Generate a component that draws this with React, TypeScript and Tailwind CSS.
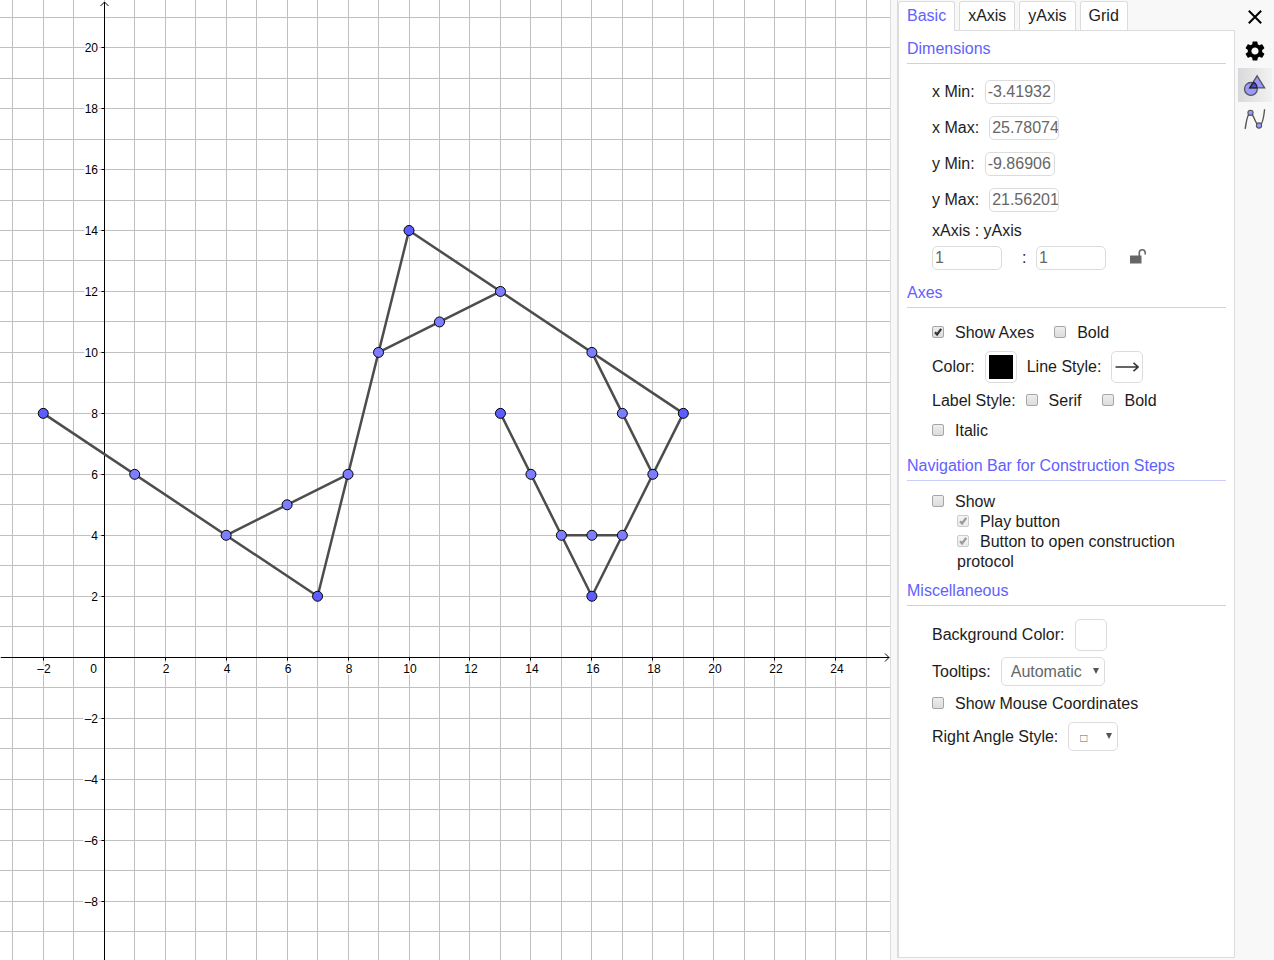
import React, { useEffect, useRef, useState } from "react";
import { MdSettings } from "react-icons/md";

const UNIT = 30.479;
const ORIGIN_X = 104.22;
const ORIGIN_Y = 657.2;

const px = (x: number) => ORIGIN_X + x * UNIT;
const py = (y: number) => ORIGIN_Y - y * UNIT;
const snap = (v: number) => Math.floor(v) + 0.5;

type Pt = [number, number];

const segments: [Pt, Pt][] = [
  [[-2, 8], [7, 2]],
  [[4, 4], [8, 6]],
  [[7, 2], [10, 14]],
  [[9, 10], [13, 12]],
  [[10, 14], [19, 8]],
  [[16, 10], [18, 6]],
  [[19, 8], [16, 2]],
  [[15, 4], [17, 4]],
  [[13, 8], [16, 2]],
];

const freePoints: Pt[] = [[-2, 8], [7, 2], [10, 14], [19, 8], [16, 2], [13, 8]];
const derivedPoints: Pt[] = [
  [1, 6], [4, 4], [6, 5], [8, 6], [9, 10], [11, 11], [13, 12],
  [16, 10], [17, 8], [18, 6], [17, 4], [15, 4], [16, 4], [14, 6],
];

function range(from: number, to: number) {
  const out: number[] = [];
  for (let i = from; i <= to; i++) out.push(i);
  return out;
}

const format = (n: number) => (n < 0 ? `–${-n}` : `${n}`);

function GraphicsView() {
  const ref = useRef<HTMLDivElement>(null);
  const [size, setSize] = useState({ w: 890, h: 960 });

  useEffect(() => {
    const el = ref.current;
    if (!el) return;
    const update = () => setSize({ w: el.clientWidth, h: el.clientHeight });
    update();
    const observer = new ResizeObserver(update);
    observer.observe(el);
    return () => observer.disconnect();
  }, []);

  const xs = range(Math.ceil(-ORIGIN_X / UNIT), Math.floor((size.w - ORIGIN_X) / UNIT));
  const ys = range(Math.ceil((ORIGIN_Y - size.h) / UNIT), Math.floor(ORIGIN_Y / UNIT));
  const ax = snap(ORIGIN_X);
  const ay = snap(ORIGIN_Y);
  const xLabels = xs.filter((n) => n % 2 === 0 && n !== 0);
  const yLabels = ys.filter((n) => n % 2 === 0 && n !== 0);

  return (
    <main ref={ref} className="min-w-0 flex-1 overflow-hidden bg-white">
      <svg width={size.w} height={size.h} className="block" role="img" aria-label="Graphics View">
        <g stroke="#c0c0c0" strokeWidth="1">
          {xs.map((n) => (
            <line key={`v${n}`} x1={snap(px(n))} x2={snap(px(n))} y1="0" y2={size.h} />
          ))}
          {ys.map((n) => (
            <line key={`h${n}`} x1="0" x2={size.w} y1={snap(py(n))} y2={snap(py(n))} />
          ))}
        </g>
        <g stroke="#000" strokeWidth="1" fill="none">
          <line x1="1" x2={size.w - 1} y1={ay} y2={ay} />
          <line x1={ax} x2={ax} y1="2" y2={size.h} />
          <path d={`M${ax - 4} 6L${ax} 2L${ax + 4} 6`} />
          <path d={`M${size.w - 5} ${ay - 4}L${size.w - 1} ${ay}L${size.w - 5} ${ay + 4}`} />
          {xLabels.map((n) => (
            <line key={n} x1={snap(px(n))} x2={snap(px(n))} y1={ay} y2={ay + 3} />
          ))}
          {yLabels.map((n) => (
            <line key={n} x1={ax - 3} x2={ax} y1={snap(py(n))} y2={snap(py(n))} />
          ))}
        </g>
        <g
          fill="#000"
          stroke="#fff"
          strokeWidth="3"
          paintOrder="stroke"
          className="font-['Liberation_Sans',Arial,sans-serif] text-xs"
        >
          {xLabels.map((n) => (
            <text key={n} x={Math.round(px(n) + 1)} y={ay + 15.5} textAnchor="middle">
              {format(n)}
            </text>
          ))}
          {yLabels.map((n) => (
            <text key={n} x="98" y={Math.floor(py(n)) + 5} textAnchor="end">
              {format(n)}
            </text>
          ))}
          <text x="97" y={ay + 15.5} textAnchor="end">
            0
          </text>
        </g>
        <g stroke="#4d4d4d" strokeWidth="2.5" strokeLinecap="round">
          {segments.map(([a, b], i) => (
            <line key={i} x1={px(a[0])} y1={py(a[1])} x2={px(b[0])} y2={py(b[1])} />
          ))}
        </g>
        <g stroke="#000" strokeWidth="1">
          {derivedPoints.map(([x, y]) => (
            <circle key={`${x},${y}`} cx={px(x)} cy={py(y)} r="5" fill="#7d7dff" />
          ))}
          {freePoints.map(([x, y]) => (
            <circle key={`${x},${y}`} cx={px(x)} cy={py(y)} r="5" fill="#5d5dff" />
          ))}
        </g>
      </svg>
    </main>
  );
}

function SectionTitle({ children }: { children: React.ReactNode }) {
  return <h2 className="border-b border-[#ccccff] pb-1 leading-5 text-[#6161ff]">{children}</h2>;
}

function NumberField({
  id,
  label,
  value,
}: {
  id: string;
  label: string;
  value: string;
}) {
  return (
    <div className="flex items-center gap-2.5">
      <label htmlFor={id}>{label}</label>
      <TextBox id={id} value={value} />
    </div>
  );
}

function TextBox({ id, value, name }: { id: string; value: string; name?: string }) {
  return (
    <input
      id={id}
      type="text"
      defaultValue={value}
      aria-label={name}
      className="h-6 w-[70px] rounded-[5px] border border-[#dcdcdc] bg-white pl-0.5 text-[#666] outline-none"
    />
  );
}

function Check({
  id,
  label,
  checked = false,
  disabled = false,
}: {
  id: string;
  label: string;
  checked?: boolean;
  disabled?: boolean;
}) {
  return (
    <div>
      <span className="relative mr-[11px] inline-block size-3 align-baseline">
        <input
          id={id}
          type="checkbox"
          defaultChecked={checked}
          disabled={disabled}
          className="peer block size-3 appearance-none rounded-[2px] border border-[#a6a6a6] bg-linear-to-b from-[#eeeeee] to-[#dcdcdc] disabled:border-[#cccccc] disabled:from-[#f4f4f4] disabled:to-[#ebebeb]"
        />
        <svg
          viewBox="0 0 12 12"
          className="pointer-events-none absolute inset-0 hidden size-3 text-[#333] peer-checked:block peer-disabled:text-[#999]"
          aria-hidden="true"
        >
          <path d="M3 6.2L5.1 8.5L9.2 2.9" fill="none" stroke="currentColor" strokeWidth="2.2" />
        </svg>
      </span>
      <label htmlFor={id}>{label}</label>
    </div>
  );
}

function Arrow() {
  return (
    <svg
      viewBox="0 0 6 6"
      className="pointer-events-none absolute top-[11px] right-1.5 size-1.5"
      aria-hidden="true"
    >
      <path d="M0 0H6L3 6Z" fill="#555" />
    </svg>
  );
}

const tabs = ["Basic", "xAxis", "yAxis", "Grid"];

export default function App() {
  return (
    <div className="flex min-h-screen bg-[#f8f8f8] font-['Liberation_Sans',Arial,sans-serif] text-base leading-5 text-[#1c1c1c]">
      <GraphicsView />
      <aside className="flex w-[384px] shrink-0 border-l border-[#dcdcdc] pb-0.5 pl-1.5">
        <div className="flex w-[338px] flex-col border-l border-[#dcdcdc]">
          <div role="tablist" className="flex gap-1 pt-px">
            {tabs.map((t, i) => (
              <button
                key={t}
                type="button"
                role="tab"
                aria-selected={i === 0}
                className="h-[29px] rounded-t-[3px] border border-b-0 border-[#dcdcdc] bg-white px-2 pb-px aria-selected:relative aria-selected:-mb-px aria-selected:h-[30px] aria-selected:pb-0.5 aria-selected:text-[#6161ff]"
              >
                {t}
              </button>
            ))}
          </div>
          <div
            role="tabpanel"
            className="flex flex-1 flex-col border border-[#dcdcdc] bg-white px-2 pt-2"
          >
            <SectionTitle>Dimensions</SectionTitle>
            <div className="flex flex-col gap-3 pt-4 pl-[25px]">
              <NumberField id="xmin" label="x Min:" value="-3.41932" />
              <NumberField id="xmax" label="x Max:" value="25.78074" />
              <NumberField id="ymin" label="y Min:" value="-9.86906" />
              <NumberField id="ymax" label="y Max:" value="21.56201" />
            </div>
            <div className="pt-[9px] pb-[13px] pl-[25px]">
              <p>xAxis : yAxis</p>
              <div className="flex items-center pt-[5px]">
                <TextBox id="ratio-x" value="1" name="xAxis ratio" />
                <span className="w-[34px] pl-5">:</span>
                <TextBox id="ratio-y" value="1" name="yAxis ratio" />
                <button type="button" aria-label="Lock ratio" className="mb-1 ml-6">
                  <svg viewBox="0 0 16 16" className="block size-4" aria-hidden="true">
                    <path d="M0 7.5H11.5V15.5H0Z" fill="#666" />
                    <path
                      d="M9.3 8V4.2A3 3 0 0 1 15.2 4.2V6.6"
                      fill="none"
                      stroke="#666"
                      strokeWidth="1.6"
                    />
                  </svg>
                </button>
              </div>
            </div>

            <SectionTitle>Axes</SectionTitle>
            <div className="pt-[15px] pb-[15px] pl-[25px]">
              <div className="flex gap-5">
                <Check id="show-axes" label="Show Axes" checked />
                <Check id="axes-bold" label="Bold" />
              </div>
              <div className="flex items-center py-2">
                <span className="mr-2.5">Color:</span>
                <button
                  type="button"
                  aria-label="Axes color"
                  className="size-8 rounded-[5px] border border-[#dcdcdc] bg-white p-[3px]"
                >
                  <span className="block size-6 bg-black" />
                </button>
                <span className="mr-2.5 ml-2.5">Line Style:</span>
                <button
                  type="button"
                  aria-label="Line style"
                  className="flex size-8 items-center justify-center rounded-[5px] border border-[#dcdcdc] bg-white"
                >
                  <svg viewBox="0 0 24 10" className="h-2.5 w-6" aria-hidden="true">
                    <path d="M0.5 5H23M18.5 0.8L23.2 5L18.5 9.2" fill="none" stroke="#333" strokeWidth="1.6" />
                  </svg>
                </button>
              </div>
              <div className="flex flex-wrap gap-x-5 gap-y-2.5">
                <div className="flex gap-2.5">
                  <span>Label Style:</span>
                  <Check id="label-serif" label="Serif" />
                </div>
                <Check id="label-bold" label="Bold" />
                <div className="w-full">
                  <Check id="label-italic" label="Italic" />
                </div>
              </div>
            </div>

            <SectionTitle>Navigation Bar for Construction Steps</SectionTitle>
            <div className="pt-[11px] pb-[9px] pl-[25px]">
              <Check id="nav-show" label="Show" />
              <div className="pl-[25px]">
                <Check id="nav-play" label="Play button" checked disabled />
                <Check
                  id="nav-protocol"
                  label="Button to open construction protocol"
                  checked
                  disabled
                />
              </div>
            </div>

            <SectionTitle>Miscellaneous</SectionTitle>
            <div className="pt-[13px] pl-[25px]">
              <div className="flex items-center gap-2.5">
                <span>Background Color:</span>
                <button
                  type="button"
                  aria-label="Background color"
                  className="size-8 rounded-[5px] border border-[#dcdcdc] bg-white"
                />
              </div>
              <div className="flex items-center gap-2.5 pt-1.5">
                <label htmlFor="tooltips">Tooltips:</label>
                <span className="relative">
                  <select
                    id="tooltips"
                    className="block h-[29px] w-[104px] appearance-none rounded-[5px] border border-[#dcdcdc] bg-white pl-[9px] text-[#666] outline-none"
                  >
                    <option>Automatic</option>
                  </select>
                  <Arrow />
                </span>
              </div>
              <div className="py-2">
                <Check id="mouse" label="Show Mouse Coordinates" />
              </div>
              <div className="flex items-center gap-2.5">
                <label htmlFor="right-angle">Right Angle Style:</label>
                <span className="relative">
                  <select
                    id="right-angle"
                    className="block h-[29px] w-[50px] appearance-none rounded-[5px] border border-[#dcdcdc] bg-white pt-0.5 pl-[11px] text-xs text-[#666] outline-none"
                  >
                    <option>□</option>
                  </select>
                  <Arrow />
                </span>
              </div>
            </div>
          </div>
        </div>

        <nav aria-label="Settings" className="flex flex-col pl-[3px]">
          <button type="button" aria-label="Close" className="size-[34px]">
            <svg viewBox="0 0 34 34" className="block size-full" aria-hidden="true">
              <path d="M10.8 10.8L23.2 23.2M23.2 10.8L10.8 23.2" stroke="#000" strokeWidth="2" />
            </svg>
          </button>
          <button
            type="button"
            aria-label="Global settings"
            className="flex size-[34px] items-center justify-center text-black"
          >
            <MdSettings className="size-6" />
          </button>
          <button
            type="button"
            aria-label="Objects"
            className="size-[34px] bg-linear-to-r from-[#d9d9dc] to-[#f2f2f2]"
          >
            <svg viewBox="0 0 34 34" className="block size-full" aria-hidden="true">
              <g stroke="#555" strokeWidth="1.3">
                <circle cx="12.9" cy="20.9" r="6.4" fill="#9999ff" />
                <path d="M19.1 7.8L26.6 19.9H11.6Z" fill="#9999ff" />
                <path d="M15.6 14.4L11.8 19.9H19A6.4 6.4 0 0 0 15.6 14.4Z" fill="#4d4dd8" stroke="#222" strokeWidth="1.2" />
              </g>
            </svg>
          </button>
          <button type="button" aria-label="Graphics settings" className="size-[34px]">
            <svg viewBox="0 0 34 34" className="block size-full" aria-hidden="true">
              <path
                d="M7.2 26.8C8.4 18 10 11 12.5 11C15.6 11 17.5 23.6 21 23.6C24 23.6 25.8 15 26.6 7.2"
                fill="none"
                stroke="#555"
                strokeWidth="1.4"
              />
              <g fill="#9999ff" stroke="#555" strokeWidth="1.1">
                <circle cx="12.5" cy="10.8" r="2.6" />
                <circle cx="21" cy="23.5" r="2.6" />
              </g>
            </svg>
          </button>
        </nav>
      </aside>
    </div>
  );
}
